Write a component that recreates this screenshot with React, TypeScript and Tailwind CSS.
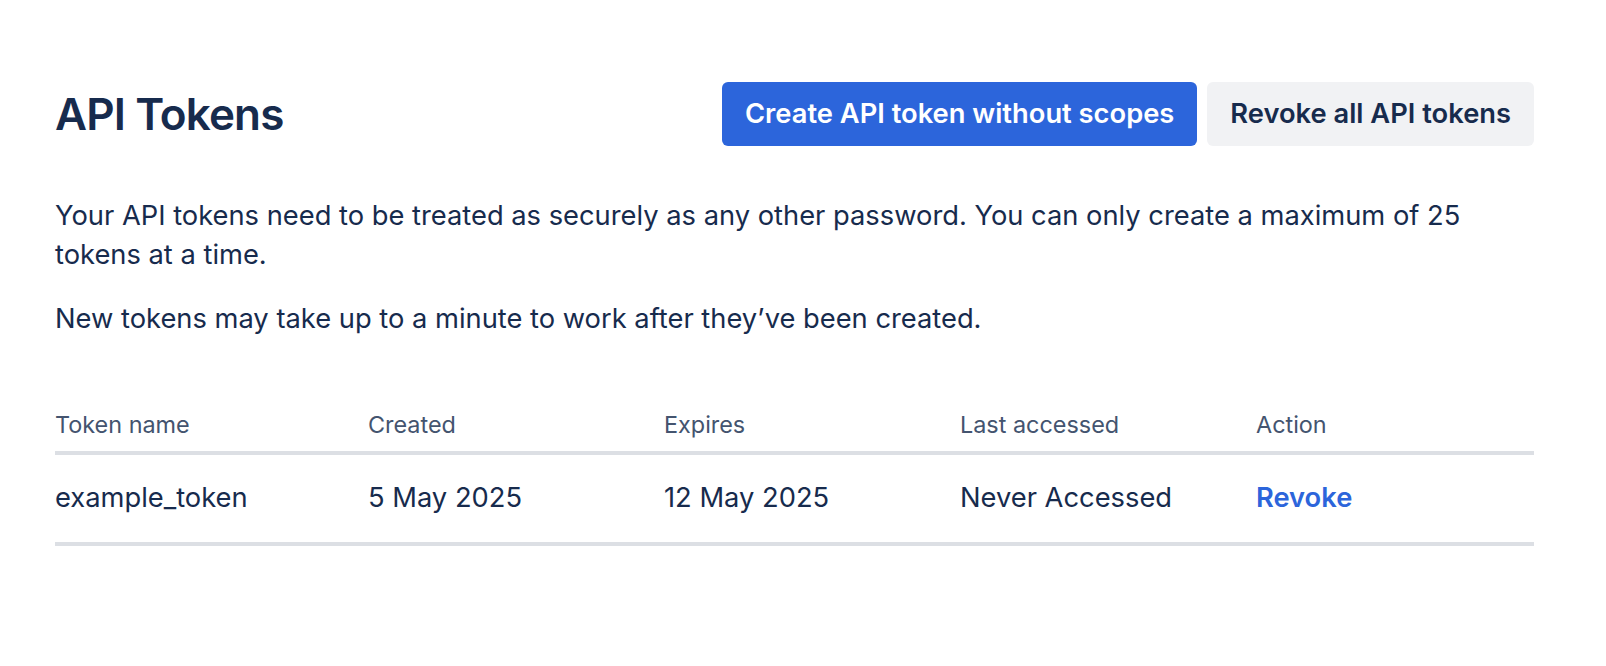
export default function App() {
  const rows = [
    { name: 'example_token', created: '5 May 2025', expires: '12 May 2025', accessed: 'Never Accessed' },
  ];

  return (
    <div className="min-h-screen bg-white font-['Inter',sans-serif] text-[#172b4d]">
      <main className="ml-[55px] w-[1479px] pt-[82px]">
        <div className="flex h-[64px] items-center justify-between">
          <h1 className="text-[44px] font-semibold leading-none tracking-[-0.02em]">API Tokens</h1>
          <div className="flex gap-[10px]">
            <button className="h-[64px] rounded-[6px] bg-[#2c65db] px-[23px] text-[27.3px] font-semibold text-white">
              Create API token without scopes
            </button>
            <button className="h-[64px] rounded-[6px] bg-[#f1f2f4] px-[23px] text-[27.3px] font-semibold text-[#172b4d]">
              Revoke all API tokens
            </button>
          </div>
        </div>

        <p className="mt-[50px] text-[27.3px] leading-[39px]">
          Your API tokens need to be treated as securely as any other password. You can only create a maximum of 25
          tokens at a time.
        </p>
        <p className="mt-[25px] text-[27.3px] leading-[39px]">
          New tokens may take up to a minute to work after they’ve been created.
        </p>

        <table className="mt-[73px] w-full table-fixed border-collapse text-left">
          <colgroup>
            <col className="w-[313px]" />
            <col className="w-[296px]" />
            <col className="w-[296px]" />
            <col className="w-[296px]" />
            <col />
          </colgroup>
          <thead>
            <tr className="border-b-4 border-[#dcdfe4] text-[23.4px] leading-[28px] text-[#44546f]">
              <th className="pb-[12px] font-normal">Token name</th>
              <th className="pb-[12px] font-normal">Created</th>
              <th className="pb-[12px] font-normal">Expires</th>
              <th className="pb-[12px] font-normal">Last accessed</th>
              <th className="pb-[12px] font-normal">Action</th>
            </tr>
          </thead>
          <tbody>
            {rows.map(r => (
              <tr key={r.name} className="h-[91px] border-b-4 border-[#dcdfe4] text-[27.3px]">
                <td>{r.name}</td>
                <td>{r.created}</td>
                <td>{r.expires}</td>
                <td>{r.accessed}</td>
                <td>
                  <a href="#" className="font-semibold text-[#2c65db]">Revoke</a>
                </td>
              </tr>
            ))}
          </tbody>
        </table>
      </main>
    </div>
  );
}
